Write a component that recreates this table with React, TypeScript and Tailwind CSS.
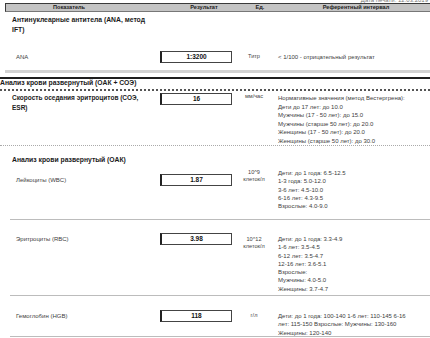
import React from "react";

const Box = ({ v }: { v: string }) => (
  <div className="h-[12px] w-[72px] border border-[#444] border-l-2 border-l-[#222] bg-white flex items-center justify-center text-[6.5px] font-bold text-[#111] leading-none">
    {v}
  </div>
);

type RowProps = {
  h: string;
  label: React.ReactNode;
  labelCls: string;
  boxCls: string;
  value: string;
  unitCls: string;
  units: string[];
  refCls: string;
  refs: string[];
  bottom?: string;
};

const Row = (p: RowProps) => (
  <div className={`flex ${p.h} ${p.bottom ?? ""}`}>
    <div className={`w-[160px] shrink-0 ${p.labelCls}`}>{p.label}</div>
    <div className={`w-[72px] shrink-0 ${p.boxCls}`}>
      <Box v={p.value} />
    </div>
    <div className={`w-[44px] shrink-0 flex flex-col items-center text-[5.6px] leading-[7px] text-[#444] ${p.unitCls}`}>
      {p.units.map((u, i) => (
        <div key={i} className="whitespace-nowrap">{u}</div>
      ))}
    </div>
    <div className={`pl-[2px] flex-1 text-[6px] text-[#3d3d3d] ${p.refCls}`}>
      {p.refs.map((r, i) => (
        <div key={i} className="whitespace-nowrap">{r}</div>
      ))}
    </div>
  </div>
);

const Rule = () => <div className="ml-[10px] h-px bg-[#bcbcbc]" />;

export default function App() {
  return (
    <div className="w-[430px] h-[338px] overflow-hidden bg-white font-['Liberation_Sans',Arial,sans-serif]">
      {/* clipped top strip */}
      <div className="h-[3px] overflow-hidden flex justify-end items-end pr-[2px]">
        <div className="text-[6px] leading-[6px] text-[#777] whitespace-nowrap">Дата печати: 12.03.2019</div>
      </div>
      {/* header */}
      <div className="ml-[5px] h-[9px] flex items-center bg-[#c4c4c4] border-t border-l border-[#3a3a3a] border-b border-b-[#777] text-[5.6px] font-bold text-[#222] leading-none">
        <div className="w-[126px] text-center">Показатель</div>
        <div className="w-[44px]" />
        <div className="w-[56px] text-center">Результат</div>
        <div className="w-[56px] text-center">Ед.</div>
        <div className="w-[136px] text-center">Референтный интервал</div>
      </div>

      {/* ANA section */}
      <div className="pt-[3px] pl-[12px] text-[6.8px] font-bold leading-[10px] text-[#1a1a1a]">
        Антинуклеарные антитела (ANA, метод
        <br />
        IFT)
      </div>
      <Row
        h="h-[35px]"
        label="ANA"
        labelCls="pl-[16px] pt-[18px] text-[6px] leading-[8px] text-[#3d3d3d]"
        boxCls="pt-[16px]"
        value="1:3200"
        unitCls="pt-[18px]"
        units={["Титр"]}
        refCls="pt-[18px] leading-[8px]"
        refs={["< 1/100 - отрицательный результат"]}
      />
      <div className="ml-[5px] h-[3px] bg-[#d2d2d2]" />
      <div className="h-[4px]" />
      <div className="h-[2px] bg-[#1e1e1e]" />

      {/* OAK + SOE */}
      <div className="text-[6.8px] font-bold leading-[8px] text-[#1a1a1a] whitespace-nowrap">
        Анализ крови развернутый (ОАК + СОЭ)
      </div>
      <div className="h-[2px]" />
      <div className="h-[2px] border-b-2 border-dotted border-[#555]" />
      <Row
        h="h-[55px]"
        bottom="border-b border-dotted border-[#aaa]"
        label={
          <>
            Скорость оседания эритроцитов (СОЭ,
            <br />
            ESR)
          </>
        }
        labelCls="pl-[12px] pt-[2px] text-[6.5px] font-bold leading-[10px] text-[#222]"
        boxCls="pt-[2px]"
        value="16"
        unitCls="pt-[1.5px]"
        units={["мм/час"]}
        refCls="pt-[3px] leading-[8.6px]"
        refs={[
          "Нормативные значения (метод Вестергрена):",
          "Дети до 17 лет: до 10.0",
          "Мужчины (17 - 50 лет): до 15.0",
          "Мужчины (старше 50 лет): до 20.0",
          "Женщины (17 - 50 лет): до 20.0",
          "Женщины (старше 50 лет): до 30.0",
        ]}
      />

      {/* OAK */}
      <div className="h-[18px] pt-[10px] pl-[12px] text-[6.8px] font-bold leading-[8px] text-[#1a1a1a] whitespace-nowrap">
        Анализ крови развернутый (ОАК)
      </div>
      <Row
        h="h-[55px]"
        label="Лейкоциты (WBC)"
        labelCls="pl-[16px] pt-[12px] text-[6px] leading-[8px] text-[#3d3d3d]"
        boxCls="pt-[10px]"
        value="1.87"
        unitCls="pt-[5px]"
        units={["10^9", "клеток/л"]}
        refCls="pt-[5px] leading-[8.3px]"
        refs={[
          "Дети: до 1 года: 6.5-12.5",
          "1-3 года: 5.0-12.0",
          "3-6 лет: 4.5-10.0",
          "6-16 лет: 4.3-9.5",
          "Взрослые: 4.0-9.0",
        ]}
      />
      <Rule />
      <Row
        h="h-[75px]"
        label="Эритроциты (RBC)"
        labelCls="pl-[16px] pt-[15px] text-[6px] leading-[8px] text-[#3d3d3d]"
        boxCls="pt-[13px]"
        value="3.98"
        unitCls="pt-[15.5px]"
        units={["10^12", "клеток/л"]}
        refCls="pt-[15px] leading-[8.3px]"
        refs={[
          "Дети: до 1 года: 3.3-4.9",
          "1-6 лет: 3.5-4.5",
          "6-12 лет: 3.5-4.7",
          "12-16 лет: 3.6-5.1",
          "Взрослые:",
          "Мужчины: 4.0-5.0",
          "Женщины: 3.7-4.7",
        ]}
      />
      <Rule />
      <Row
        h="h-[40px]"
        label="Гемоглобин (HGB)"
        labelCls="pl-[16px] pt-[16px] text-[6px] leading-[8px] text-[#3d3d3d]"
        boxCls="pt-[14px]"
        value="118"
        unitCls="pt-[16px]"
        units={["г/л"]}
        refCls="pt-[16px] leading-[8.3px]"
        refs={[
          "Дети: до 1 года: 100-140 1-6 лет: 110-145 6-16",
          "лет: 115-150 Взрослые: Мужчины: 130-160",
          "Женщины: 120-140",
        ]}
      />
      <Rule />
    </div>
  );
}
